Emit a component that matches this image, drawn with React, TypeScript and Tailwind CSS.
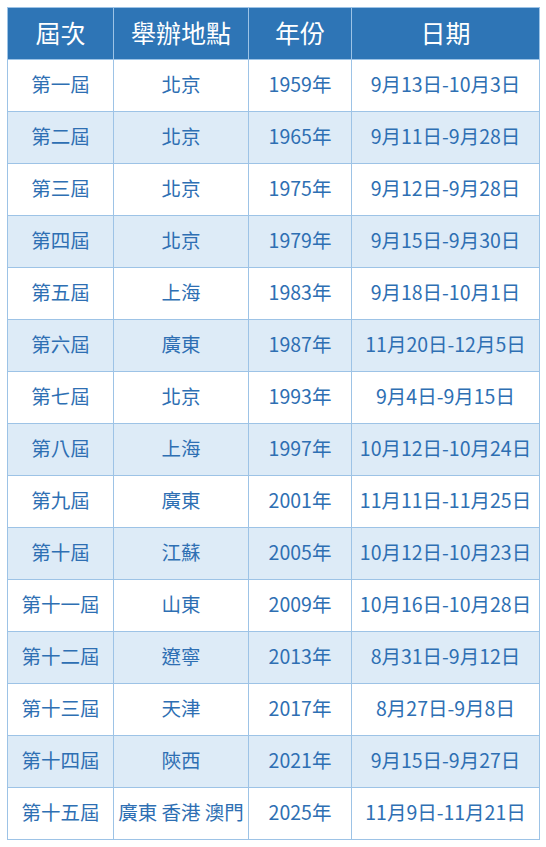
import React from 'react';

const rows = [
  ['第一屆', '北京', '1959年', '9月13日-10月3日'],
  ['第二屆', '北京', '1965年', '9月11日-9月28日'],
  ['第三屆', '北京', '1975年', '9月12日-9月28日'],
  ['第四屆', '北京', '1979年', '9月15日-9月30日'],
  ['第五屆', '上海', '1983年', '9月18日-10月1日'],
  ['第六屆', '廣東', '1987年', '11月20日-12月5日'],
  ['第七屆', '北京', '1993年', '9月4日-9月15日'],
  ['第八屆', '上海', '1997年', '10月12日-10月24日'],
  ['第九屆', '廣東', '2001年', '11月11日-11月25日'],
  ['第十屆', '江蘇', '2005年', '10月12日-10月23日'],
  ['第十一屆', '山東', '2009年', '10月16日-10月28日'],
  ['第十二屆', '遼寧', '2013年', '8月31日-9月12日'],
  ['第十三屆', '天津', '2017年', '8月27日-9月8日'],
  ['第十四屆', '陝西', '2021年', '9月15日-9月27日'],
  ['第十五屆', '廣東 香港 澳門', '2025年', '11月9日-11月21日'],
];

const headers = ['屆次', '舉辦地點', '年份', '日期'];

export default function App() {
  return (
    <div
      className="min-h-screen bg-white p-[7px]"
      style={{ fontFamily: '"Noto Sans CJK TC", "Noto Sans", sans-serif' }}
    >
      <table className="border-collapse table-fixed w-[532px]">
        <colgroup>
          <col className="w-[106px]" />
          <col className="w-[135px]" />
          <col className="w-[103px]" />
          <col className="w-[188px]" />
        </colgroup>
        <thead>
          <tr className="h-[52px] bg-[#2e75b6]">
            {headers.map((h) => (
              <th
                key={h}
                className="border border-[#9dc3e6] text-center text-[25px] font-normal text-white leading-none p-0 pb-[3px]"
              >
                {h}
              </th>
            ))}
          </tr>
        </thead>
        <tbody>
          {rows.map((r, i) => (
            <tr key={r[0]} className={`h-[52px] ${i % 2 === 1 ? 'bg-[#ddebf7]' : 'bg-white'}`}>
              {r.map((c, j) => (
                <td
                  key={j}
                  className="border border-[#9dc3e6] text-center text-[19.5px] font-normal text-[#2e6fb3] leading-none p-0 pb-[3px] whitespace-nowrap"
                >
                  {c}
                </td>
              ))}
            </tr>
          ))}
        </tbody>
      </table>
    </div>
  );
}
